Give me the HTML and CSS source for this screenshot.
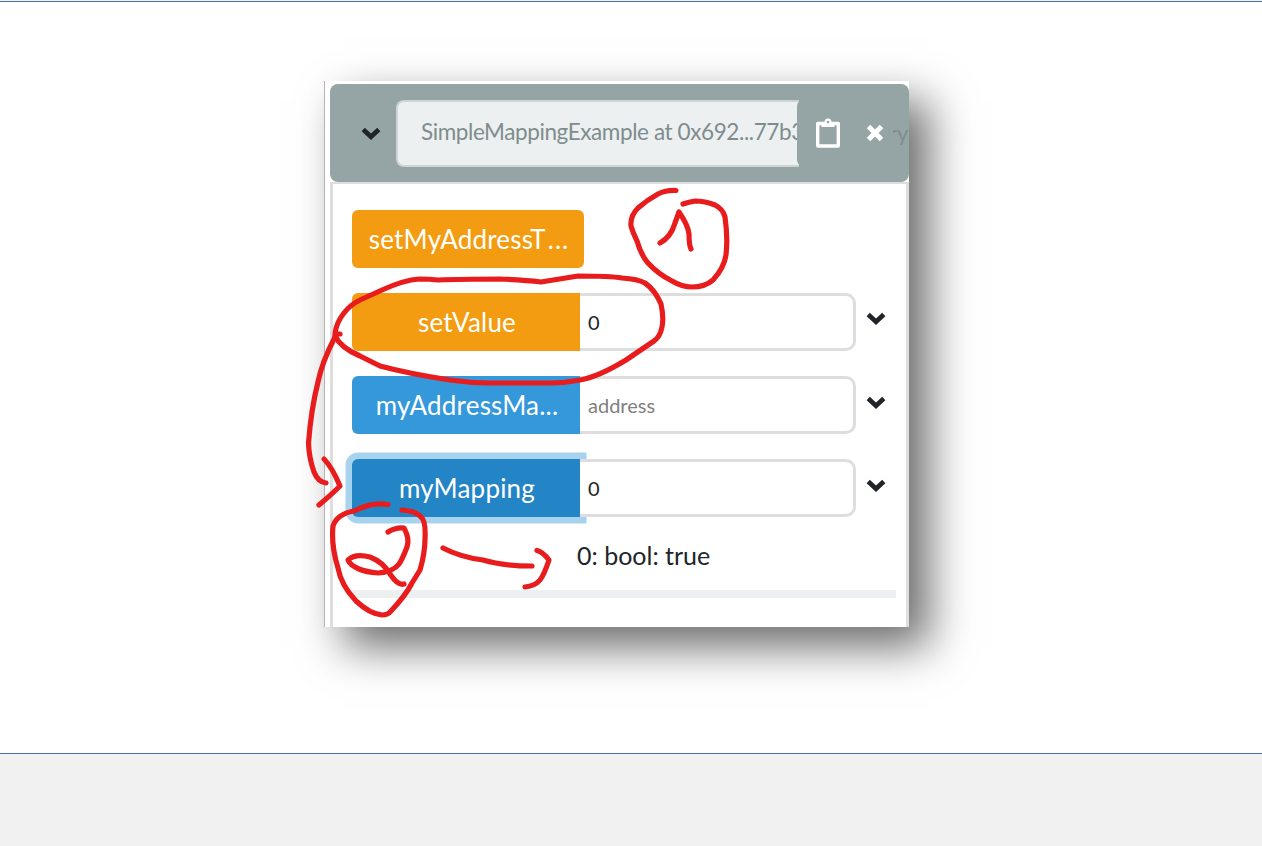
FILE: index.html
```html
<!DOCTYPE html>
<html lang="en">
<head>
<meta charset="utf-8">
<title>SimpleMappingExample</title>
<link rel="stylesheet" href="styles.css">
</head>
<body>
<main class="stage">
  <section class="shot">
    <header class="head">
      <svg class="chev" viewBox="0 0 20 13"><path d="M2.2 2.5 10 9.7 17.8 2.5"/></svg>
      <div class="title"><span class="title-text">SimpleMappingExample at 0x692...77b3</span></div>
      <div class="actions">
        <svg class="clip" viewBox="0 0 26 32"><path class="clip-board" d="M2.700 6.500H23.300V29H2.700Z"/><path class="clip-top" d="M6.500 10V5H9.500a3.500 3.500 0 0 1 7 0H19.500V10Z"/><circle class="clip-hole" cx="13" cy="5" r="1.3"/></svg>
        <svg class="close" viewBox="0 0 18 18"><path d="M2.500 2.500 15.500 15.500M15.500 2.500 2.500 15.500"/></svg>
      </div>
      <span class="memory">ry</span>
    </header>
    <div class="body">
      <div class="row"><button class="btn orange solo"><span>setMyAddressT</span><span class="dots">...</span></button></div>
      <div class="row"><button class="btn orange"><span>setValue</span></button><div class="field">0</div><svg class="chev" viewBox="0 0 20 13"><path d="M2.2 2.5 10 9.7 17.8 2.5"/></svg></div>
      <div class="row"><button class="btn blue"><span>myAddressMa...</span></button><div class="field hint">address</div><svg class="chev low" viewBox="0 0 20 13"><path d="M2.2 2.5 10 9.7 17.8 2.5"/></svg></div>
      <div class="row"><button class="btn focus"><span>myMapping</span></button><div class="field">0</div><svg class="chev low" viewBox="0 0 20 13"><path d="M2.2 2.5 10 9.7 17.8 2.5"/></svg></div>
      <div class="result">0: bool: true</div>
      <div class="rule"></div>
    </div>
  </section>
  <svg class="ink" viewBox="0 0 1262 752">
    <g transform="translate(0 -2)">
    <path d="M676 190.500Q666 190 658 194Q647 200 638 208Q630 216 631 226Q633 233 637 241Q641 255 648 263Q658 274 672 281Q682 287 692 287Q705 287 713 280Q724 268 726 255Q728 238 725 217Q723 209 715 205Q705 201 695 201Q689 202 683 204"/>
    <path d="M660 243Q671 237 675 223L679 212Q688 225 689 234Q689 245 691 249"/>
    <path d="M340 334L335 334Q336 323 344 313Q350 305 360 300L382 290Q404 280 419 279Q430 279 438 280Q460 279 500 279Q525 280 541 282L578 276Q610 276 622 278Q638 279 645 283Q655 290 661 304Q664 318 662 327Q660 337 654 341L626 360Q598 377 580 380Q565 383 550 383H490Q470 383 450 380Q410 374 380 366Q368 360 360 356Q341 348 335 336"/>
    <path d="M335 337Q322 362 318 382Q311 410 308.500 443Q309 458 314 472Q318 482 326 483"/>
    <path d="M324 459Q332 467 340 486Q332 494 319 505"/>
    <path d="M388 504.500Q372 502 354 511Q337 514 333 526Q331 545 338 568Q341 585 356 601Q370 614 382 615Q388 615 391 611Q406 595 412 583L420 570Q425 553 425 539Q426 521 421 517Q416 511 402 510"/>
    <path d="M388 532Q396 527 404 528Q410 539 407 547Q402 560 399 564Q393 572 378 573Q366 572 359 569Q350 565 348 560Q355 553 370 557Q383 562 390 574Q398 586 404 584"/>
    <path d="M443 548Q460 557 483 560Q503 566 532 566"/>
    <path d="M537 550.500Q543 552 549 560Q544 575 540 580Q535 586 525 587"/>
    </g>
  </svg>
</main>
</body>
</html>
```
FILE: styles.css
```css
* { box-sizing: border-box; }
html { background: #f1f1f1; }
body { margin: 0; background: #f1f1f1; font-family: Lato, "Open Sans", sans-serif; color: #212529; }
.stage { position: relative; height: 753px; margin-top: 1px; border-top: 1px solid #4472b0; border-bottom: 1px solid #4472b0; background: #fff; padding: 79px 0 0 324px; }
.shot { width: 585px; height: 546px; padding: 3px 0 0 5px; background: #fff; border-left: 1px solid #b4b4b4; box-shadow: 20px 20px 42px rgba(0,0,0,.58); overflow: hidden; }
.head { height: 98px; border-radius: 8px; background: #95a5a5; display: flex; align-items: center; padding-left: 31px; overflow: hidden; }
.chev { width: 20px; height: 13px; flex: none; fill: none; stroke: #212529; stroke-width: 4.700; }
.title { width: 403px; height: 67px; margin-left: 15px; flex: none; border: 2px solid #ced4da; border-right: 0; border-radius: 8px 0 0 8px; background: #ecf0f1; padding-left: 23px; white-space: nowrap; font-size: 22.500px; line-height: 60px; color: #7f8c8d; }
.title-text { display: inline-block; letter-spacing: -.4px; }
.actions { width: 96px; height: 66px; margin-left: -2px; position: relative; flex: none; display: flex; align-items: center; border-radius: 6px; background: #95a5a5; }
.clip { width: 26px; height: 32px; margin-left: 18px; flex: none; }
.clip-board { fill: none; stroke: #fff; stroke-width: 3.400; stroke-linejoin: round; }
.clip-top { fill: #fff; }
.clip-hole { fill: #95a5a5; }
.close { width: 18px; height: 18px; margin-left: 25px; flex: none; stroke: #fff; stroke-width: 5; }
.memory { font-size: 22px; line-height: 30px; color: #7f8c8d; margin: -1px 0 0 -4px; }
.body { height: 446px; border: 3px solid #dedede; border-width: 2px 3px 0; padding: 26px 10px 0 19px; }
.row { height: 58px; margin-bottom: 25.150px; display: flex; align-items: center; }
.btn { width: 228px; height: 58px; flex: none; padding: 0 0 0 2px; border: 0; border-radius: 6px 0 0 6px; color: #fff; font: 26px Lato, sans-serif; letter-spacing: .2px; white-space: nowrap; }
.solo { width: 232px; border-radius: 6px; }
.dots { margin-left: 2px; letter-spacing: 1px; }
.orange { background: #f39c12; }
.blue { background: #3498db; }
.focus { background: #2384c6; box-shadow: 0 0 0 6.500px #a8d3ef; }
.field { position: relative; width: 276px; height: 58px; flex: none; border: 3px solid #dedede; border-left: 0; border-radius: 0 10px 10px 0; background: #fff; padding-left: 8px; font-size: 20px; line-height: 52px; background-clip: padding-box; }
.hint { color: #808080; }
.row .chev { margin: -8px 0 0 10px; }
.row .low { margin-top: -5px; }
.result { margin: -4px 0 0 225px; height: 32px; font-size: 25px; line-height: 32px; }
.rule { height: 8px; margin-top: 19px; background: #ecf0f1; }
.ink { position: absolute; left: 0; top: 0; width: 1262px; height: 752px; fill: none; stroke: #e81c1c; stroke-width: 5.200; stroke-linecap: round; stroke-linejoin: round; }
```
